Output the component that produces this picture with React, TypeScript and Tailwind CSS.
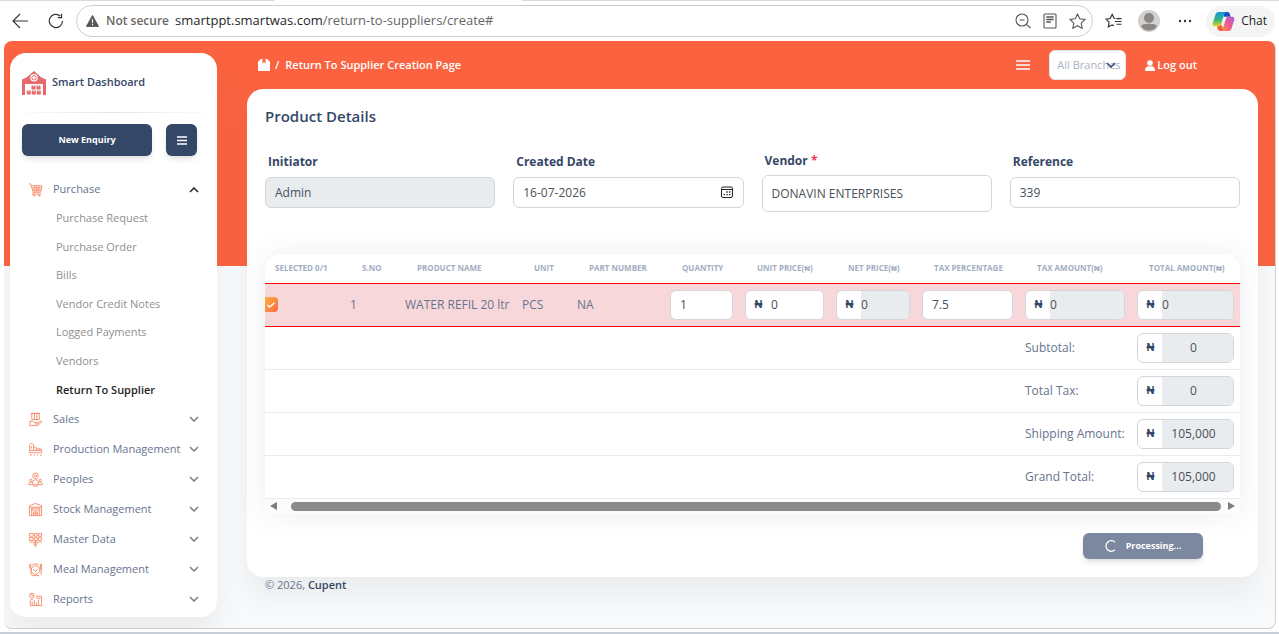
import { useState } from 'react'
import type { ReactNode } from 'react'

const purchaseLinks = [
  'Purchase Request',
  'Purchase Order',
  'Bills',
  'Vendor Credit Notes',
  'Logged Payments',
  'Vendors',
  'Return To Supplier',
]

const icons: Record<string, ReactNode> = {
  Purchase: (
    <>
      <path d="M1 2h2l2.5 9h8L15 4H3.6M4.2 6.3h10.2M4.8 8.6h9M7 4l.6 7M9.5 4v7M12 4l-.6 7M5.5 11l-.6 2h9" />
      <circle cx="6.5" cy="14.3" r="0.8" />
      <circle cx="12" cy="14.3" r="0.8" />
    </>
  ),
  Sales: (
    <>
      <path d="M4 1.5h8v6.5H4zM6.8 1.5v6.5M9.4 1.5v6.5M3 1.5h10" />
      <path d="M2 9.5v5M2 10h3l2.5 1.5h3c1 0 1 1.3 0 1.3H7.6M10.8 11.5l3-1.8c.9 0 1 .8.4 1.3L10.5 14.5H2" />
    </>
  ),
  'Production Management': (
    <>
      <path d="M1.8 9V3l1-1.3h2L6 3v6M1.8 9h12.8v2.5H1.8zM6 5l3 1.6V9M9 6.6h2.5V9M11.5 7.5H14V9M3.5 4.5v2.5" />
      <path d="M2 14h2.2M6 14h1.6M9.3 14H11M12.8 14h1.8" />
    </>
  ),
  Peoples: (
    <>
      <circle cx="8" cy="4" r="3" />
      <circle cx="8" cy="4" r="1.1" />
      <circle cx="3" cy="9" r="1.3" />
      <circle cx="13" cy="9" r="1.3" />
      <path d="M4.7 12c0-5 6.6-5 6.6 0M.7 13.5c0-3.6 4.6-3.6 4.6 0M10.7 13.5c0-3.6 4.6-3.6 4.6 0M.7 13.5h14.6M5.5 15h5" />
    </>
  ),
  'Stock Management': (
    <>
      <path d="M1.5 14.5V4L8 1.5 14.5 4v10.5zM4 14.5V6.5h8.5v8M4 8.5h8.5M6 14.5v-4h4.5v4M8.2 10.5v4M6 12.5h4.5M1.5 5.5h13" />
    </>
  ),
  'Master Data': (
    <>
      <path d="M1.5 1.5h4v3h-4zM6.8 1.5h3v3h-3zM11.2 1.5h3.3v3h-3.3zM1.5 6h4v3h-4zM6.8 6h3v3h-3zM11.2 6h3.3v3h-3.3zM1.5 10.8h13M8 9v6M5.5 12.8h5M6.5 14.8h3" />
    </>
  ),
  'Meal Management': (
    <>
      <circle cx="8" cy="8.5" r="4.6" />
      <path d="M5.8 7.5l2.2 2.8 2.3-2.8M1.8 2v4.5M3 2v4M1.8 6.5h1.4V14M14 2c-1.4 1.5-1.4 5 0 6zv12M4.5 3c2-1.4 5-1.4 7 0M4 14.5h8" />
    </>
  ),
  Reports: (
    <>
      <circle cx="4" cy="3.8" r="2.5" />
      <path d="M4 2v2h1.6M8.5 4.5h6v10h-12V9M4.5 14.5V10M6.8 14.5V8.5M9 14.5V11M11.3 14.5V8M8.5 6.5h5M2.5 8.5l3-1" />
    </>
  ),
}

const sections = [
  'Sales',
  'Production Management',
  'Peoples',
  'Stock Management',
  'Master Data',
  'Meal Management',
  'Reports',
]

const columns = [
  { label: 'Selected 0/1', width: 79 },
  { label: 'S.No', width: 55 },
  { label: 'Product Name', width: 117 },
  { label: 'Unit', width: 55 },
  { label: 'Part Number', width: 93 },
  { label: 'Quantity', width: 75 },
  { label: 'Unit Price(₦)', width: 91 },
  { label: 'Net Price(₦)', width: 86 },
  { label: 'Tax Percentage', width: 103 },
  { label: 'Tax Amount(₦)', width: 112 },
  { label: 'Total Amount(₦)', width: 109 },
]

const totals = [
  { label: 'Subtotal:', value: '0' },
  { label: 'Total Tax:', value: '0' },
  { label: 'Shipping Amount:', value: '105,000' },
  { label: 'Grand Total:', value: '105,000' },
]

const field = 'w-full rounded-md border border-[#d2d6da] px-[9px] text-[12px] text-[#495057] outline-none'

function SectionIcon({ name }: { name: string }) {
  return (
    <svg viewBox="0 0 16 16" className="size-[15px] shrink-0" fill="none" stroke="#f5825f" strokeWidth="0.9">
      {icons[name]}
    </svg>
  )
}

function Chevron({ up = false }: { up?: boolean }) {
  return (
    <svg viewBox="0 0 10 6" className="h-[6px] w-[10px] shrink-0" fill="none" stroke={up ? '#222' : '#808080'} strokeWidth="1.5">
      <path d={up ? 'M1 5l4-4 4 4' : 'M1 1l4 4 4-4'} />
    </svg>
  )
}

function BrowserBar() {
  return (
    <header className="bg-white text-[#1f1f1f]">
      {/* bottom edge of the tab strip, open under the active tab */}
      <div className="flex h-px">
        <div className="w-[275px] bg-[#d9d9d9]" />
        <div className="w-[247px]" />
        <div className="flex-1 bg-[#d9d9d9]" />
      </div>
      <div className="flex h-10 items-center pl-3 pr-1">
        <button aria-label="Back">
          <svg viewBox="0 0 16 16" className="size-4" fill="none" stroke="#333" strokeWidth="1.1">
            <path d="M16 8H1M8 1L1 8l7 7" />
          </svg>
        </button>
        <button aria-label="Refresh" className="ml-5">
          <svg viewBox="0 0 16 16" className="size-4" fill="none" stroke="#333" strokeWidth="1.2">
            <path d="M14.5 8a6.6 6.6 0 1 1-2.2-5M13.6.8v3.8H9.8" />
          </svg>
        </button>
        <div className="ml-3 flex h-8 min-w-0 flex-1 items-center rounded-full border border-[#cfcfcf] pl-[9px] pr-[6px]">
          <svg viewBox="0 0 14 13" className="h-[12px] w-[13px]">
            <path d="M7 .5L13.6 12.5H.4z" fill="#5b5653" stroke="#5b5653" strokeLinejoin="round" />
            <path d="M7 4.5v4M7 9.6v1.4" stroke="#fff" strokeWidth="1.3" />
          </svg>
          <span className="ml-[7px] text-[12px] font-semibold text-[#6b6663]">Not secure</span>
          <span className="ml-[6px] flex-1 text-[13px]">
            smartppt.smartwas.com<span className="text-[#666]">/return-to-suppliers/create#</span>
          </span>
          <div className="flex items-center gap-3">
            <svg viewBox="0 0 16 16" className="size-4" fill="none" stroke="#555" strokeWidth="1.1">
              <circle cx="7" cy="7" r="6" />
              <path d="M4.5 7h5M11.3 11.3L15.5 15" />
            </svg>
            <svg viewBox="0 0 14 16" className="h-4 w-[14px]" fill="none" stroke="#555" strokeWidth="1.1">
              <rect x="1" y="1" width="12" height="14" rx="1" />
              <path d="M3.3 4h7.4M3.3 6.5h7.4M3.3 9h4.5" strokeWidth="1.3" />
            </svg>
            <svg viewBox="0 0 18 17" className="h-4 w-[17px]" fill="none" stroke="#555" strokeWidth="1.1">
              <path d="M9 1l2.4 5.2 5.6.7-4.1 3.8 1.1 5.6L9 13.5l-5 2.8 1.1-5.6L1 6.9l5.6-.7z" />
            </svg>
          </div>
        </div>
        <div className="flex items-center">
          <svg viewBox="0 0 18 16" className="ml-3 h-4 w-[17px]" fill="none" stroke="#333" strokeWidth="1.2">
            <path d="M11 5.3L9.6 5 7.6 1 5.5 5.3 1 6l3.3 3.2-.8 5 4-2.1 2 1M12 5.5h5.5M10.5 8.5h7M12 11.5h5.5" />
          </svg>
          <svg viewBox="0 0 22 22" className="ml-4 size-[22px]">
            <circle cx="11" cy="11" r="11" fill="#d3d0cd" />
            <circle cx="11" cy="8" r="5" fill="#8b8785" />
            <path d="M3.3 16c0-3 15.4-3 15.4 0-2 6-13.4 6-15.4 0z" fill="#8b8785" />
          </svg>
          <svg viewBox="0 0 14 4" className="ml-[18px] h-1 w-[14px]" fill="#333">
            <circle cx="2" cy="2" r="1.2" />
            <circle cx="7" cy="2" r="1.2" />
            <circle cx="12" cy="2" r="1.2" />
          </svg>
          <button className="ml-[14px] flex h-[31px] items-center gap-[6px] rounded-full bg-[#f4f4f4] pl-[6px] pr-2 text-[12px]">
            <svg viewBox="0 0 24 22" className="h-[21px] w-[23px]">
              <defs>
                <linearGradient id="cpA" x1="0" y1="0" x2="0" y2="1">
                  <stop offset="0" stopColor="#1293e8" />
                  <stop offset="0.55" stopColor="#35b97c" />
                  <stop offset="1" stopColor="#f2cf22" />
                </linearGradient>
                <linearGradient id="cpB" x1="1" y1="0" x2="0" y2="1">
                  <stop offset="0" stopColor="#a55be8" />
                  <stop offset="0.5" stopColor="#ef5b8f" />
                  <stop offset="1" stopColor="#fb9a4c" />
                </linearGradient>
              </defs>
              <path d="M13 1h3.5c1.3 0 1.8 1 2.2 2.3L19.5 6H12z" fill="#1a4fc4" />
              <path d="M7 1h8c-1.5.4-2 1.5-2.5 3L9.5 14c-.5 1.4-1.2 2-2.5 2H3C.8 16 .2 14.5.8 12.5L3.5 4C4.2 2 5.2 1 7 1z" fill="url(#cpA)" />
              <path d="M17 21H9c1.5-.4 2-1.5 2.500-3L14.5 8c.5-1.4 1.2-2 2.500-2h4c2.200 0 2.800 1.500 2.200 3.500L20.500 18c-.7 2-1.700 3-3.500 3z" fill="url(#cpB)" />
              <path d="M11 21H8.5C7 21 6.300 20 5.900 18.700L5.200 16H7c1.300 0 2-.6 2.500-2l2 4z" fill="#f3622f" />
            </svg>
            Chat
          </button>
        </div>
      </div>
    </header>
  )
}

function Sidebar() {
  return (
    <aside className="w-[207px] shrink-0 self-start rounded-2xl bg-white pb-[3px] shadow-[0_20px_27px_rgba(0,0,0,0.05)]">
      <a href="#" className="flex h-[59px] items-center gap-[6px] pl-3 text-[11px] font-semibold text-[#344767]">
        <svg viewBox="0 0 24 24" className="size-6" fill="#e46a6b">
          <path fillRule="evenodd" d="M0 24V8.5L4.5 6.5 12 0l7.5 6.5L24 8.5V24h-3V13H3v11zM12 3a3.8 3.8 0 1 0 0 7.6A3.8 3.8 0 0 0 12 3z" />
          <circle cx="12" cy="6.8" r="2.2" fill="none" stroke="#e46a6b" />
          <path d="M9.5 14.5h4v4h-4zM14.5 14.5h4v4h-4zM4.8 19.5h4v4h-4zM9.8 19.5h4v4h-4zM14.8 19.5h4v4h-4z" />
          <path d="M11.5 14.5V16M16.5 14.5V16M6.8 19.5V21M11.8 19.5V21M16.8 19.5V21" stroke="#fff" strokeWidth="0.7" />
        </svg>
        Smart Dashboard
      </a>
      <div className="h-px bg-gradient-to-r from-transparent via-[#e3e4e6] to-transparent" />
      <div className="flex justify-between pl-3 pr-5 pt-[11px]">
        <button className="h-8 w-[130px] rounded-md bg-[#344767] text-[9px] font-bold text-white shadow-md">New Enquiry</button>
        <button aria-label="Menu" className="flex h-8 w-[31px] items-center justify-center rounded-md bg-[#344767] shadow-md">
          <svg viewBox="0 0 10 9" className="h-[9px] w-[10px]" stroke="#fff" strokeWidth="1.4">
            <path d="M0 1h10M0 4.5h10M0 8h10" />
          </svg>
        </button>
      </div>
      <nav className="pt-[18px] text-[11px] text-[#67748e]">
        <a href="#" className="flex h-[30px] items-center px-[18px] pt-px">
          <SectionIcon name="Purchase" />
          <span className="ml-[10px] flex-1">Purchase</span>
          <Chevron up />
        </a>
        <ul className="flex h-[200px] flex-col pl-[46px] text-[#8f8f8f]">
          {purchaseLinks.map((link) => (
            <li key={link} className="flex flex-1 items-center">
              <a href="#" className={link === 'Return To Supplier' ? 'font-semibold text-[#252525]' : ''}>
                {link}
              </a>
            </li>
          ))}
        </ul>
        {sections.map((name) => (
          <a key={name} href="#" className="flex h-[30px] items-center px-[18px]">
            <SectionIcon name={name} />
            <span className="ml-[10px] flex-1 whitespace-nowrap">{name}</span>
            <Chevron />
          </a>
        ))}
      </nav>
    </aside>
  )
}

function TopNav() {
  return (
    <div className="flex h-[36px] items-center px-[11px] pb-3 text-[11px] font-semibold text-white">
      <svg viewBox="0 0 12 12" className="size-3" fill="#fff">
        <path d="M2.8 0H4.5v4.2L6 3.5l1.5.7V0h1.700L12 3v8a1 1 0 0 1-1 1H1a1 1 0 0 1-1-1V3z" />
      </svg>
      <span className="ml-[5px]">/</span>
      <span className="ml-[6px] flex-1">Return To Supplier Creation Page</span>
      <button aria-label="Toggle sidebar">
        <svg viewBox="0 0 14 10" className="h-[10px] w-[14px]" stroke="#fff" strokeWidth="1.3">
          <path d="M0 1h14M0 5h14M0 9h14" />
        </svg>
      </button>
      <div className="relative ml-[19px]">
        <select aria-label="Branch" className="block h-[30px] w-[77px] appearance-none rounded-md border border-[#e4e6ea] bg-white pl-[7px] text-[11px] font-normal text-[#a9b2c3]">
          <option>All Branches</option>
        </select>
        <svg viewBox="0 0 10 6" className="pointer-events-none absolute right-[10px] top-3 h-[6px] w-[10px]" fill="none" stroke="#44557a" strokeWidth="1.7">
          <path d="M1 1l4 4 4-4" />
        </svg>
      </div>
      <a href="#" className="ml-[19px] mr-[50px] flex items-center gap-[2px]">
        <svg viewBox="0 0 10 11" className="h-[11px] w-[10px]" fill="#fff">
          <circle cx="5" cy="3" r="2.8" />
          <path d="M0 11c0-3 1-4.5 3-4.800h4c2 .3 3 1.800 3 4.800z" />
        </svg>
        Log out
      </a>
    </div>
  )
}

function Money({ label, value, readOnly = true, summary = false }: { label: string; value: string; readOnly?: boolean; summary?: boolean }) {
  return (
    <div className="flex h-[30px] overflow-hidden rounded-md border border-[#d2d6da] bg-white">
      <span className="flex w-6 shrink-0 items-center justify-center pl-px text-[11px] font-semibold text-[#344767]">₦</span>
      <input
        aria-label={label}
        defaultValue={value}
        readOnly={readOnly}
        className={`w-full min-w-0 text-[12px] text-[#495057] outline-none ${readOnly ? 'bg-[#e9ecef]' : 'bg-white pl-px'} ${summary ? 'pr-2 text-center' : ''}`}
      />
    </div>
  )
}

function ItemsTable() {
  const [checked, setChecked] = useState(true)

  return (
    <div className="overflow-hidden rounded-t-2xl bg-white">
      <table className="w-full table-fixed border-collapse text-left">
        <colgroup>
          {columns.map((col) => (
            <col key={col.label} style={{ width: col.width }} />
          ))}
        </colgroup>
        <thead>
          <tr className="h-[29px] text-[8px] font-bold uppercase text-[#a3aec2]">
            {columns.map((col) => (
              <th key={col.label} className="whitespace-nowrap pl-[18px] first:pl-[10px]">
                {col.label}
              </th>
            ))}
          </tr>
        </thead>
        <tbody className="text-[12px] text-[#67748e]">
          <tr className="h-[43px] border-y border-[#ff0000] bg-[#f8d7da] *:px-[6px]">
            <td>
              <label className="relative -ml-[6px] block h-[15px] w-[13px]">
                <input
                  type="checkbox"
                  aria-label="Select item"
                  checked={checked}
                  onChange={() => setChecked(!checked)}
                  className="block h-[15px] w-[13px] appearance-none rounded-r-sm bg-white checked:bg-linear-to-br checked:from-[#fbb140] checked:to-[#fb6340]"
                />
                {checked && (
                  <svg viewBox="0 0 8 6" className="pointer-events-none absolute left-[2px] top-[5px] h-[6px] w-[8px]" fill="none" stroke="#fff" strokeWidth="1.4">
                    <path d="M.5 3l2.2 2L7.5.7" />
                  </svg>
                )}
              </label>
            </td>
            <td>1</td>
            <td className="whitespace-nowrap">WATER REFIL 20 ltr</td>
            <td>PCS</td>
            <td>NA</td>
            <td>
              <input aria-label="Quantity" defaultValue="1" className={`${field} block h-[30px] bg-white`} />
            </td>
            <td>
              <Money label="Unit price" value="0" readOnly={false} />
            </td>
            <td>
              <Money label="Net price" value="0" />
            </td>
            <td>
              <input aria-label="Tax percentage" defaultValue="7.5" className={`${field} block h-[30px] bg-white`} />
            </td>
            <td>
              <Money label="Tax amount" value="0" />
            </td>
            <td>
              <Money label="Total amount" value="0" />
            </td>
          </tr>
          {totals.map((row) => (
            <tr key={row.label} className="h-[43px] border-b border-[#e9ecef] *:px-[6px]">
              <td colSpan={9} />
              <td className="whitespace-nowrap">{row.label}</td>
              <td>
                <Money label={row.label} value={row.value} summary />
              </td>
            </tr>
          ))}
        </tbody>
      </table>
      {/* horizontal scroll track */}
      <div className="flex h-[15px] items-center justify-between bg-[#fcfcfc] px-[5px]">
        <svg viewBox="0 0 7 8" className="h-2 w-[7px]" fill="#7d7d7d">
          <path d="M7 0v8L0 4z" />
        </svg>
        <div className="ml-[14px] mr-[7px] h-[9px] flex-1 rounded-full bg-[#8b8b8b]" />
        <svg viewBox="0 0 7 8" className="h-2 w-[7px]" fill="#7d7d7d">
          <path d="M0 0v8l7-4z" />
        </svg>
      </div>
    </div>
  )
}

function ProductForm() {
  const label = 'block pl-[3px] text-[12px] leading-4 font-bold text-[#344767]'

  return (
    <form className="rounded-2xl bg-white px-[18px] pb-[18px] pt-4 shadow-[0_20px_27px_rgba(0,0,0,0.05)]" onSubmit={(e) => e.preventDefault()}>
      <h1 className="text-[15px] leading-[22px] font-semibold text-[#344767]">Product Details</h1>
      <div className="mt-[26px] grid grid-cols-4 items-start gap-[18px]">
        <div className="pt-px">
          <label htmlFor="initiator" className={label}>Initiator</label>
          <input id="initiator" defaultValue="Admin" readOnly className={`${field} mt-[7px] block h-[31px] bg-[#e9ecef]`} />
        </div>
        <div className="pt-px">
          <label htmlFor="created" className={label}>Created Date</label>
          <div className="relative mt-[7px]">
            <input id="created" defaultValue="16-07-2026" className={`${field} block h-[31px] bg-white`} />
            <svg viewBox="0 0 12 12" className="pointer-events-none absolute right-[11px] top-[9px] size-3" fill="none" stroke="#222">
              <rect x="0.5" y="1" width="11" height="10.5" rx="1.5" />
              <path d="M.5 3.5h11" />
              <path d="M5.3 6h1.4M8 6h1.4M2.6 8.7H4M5.3 8.7h1.4M8 8.7h1.4" strokeWidth="1.3" />
            </svg>
          </div>
        </div>
        <div>
          <label htmlFor="vendor" className={label}>
            Vendor <span className="text-[#f5365c]">*</span>
          </label>
          <select id="vendor" className={`${field} mt-[6px] block h-[37px] appearance-none bg-white`}>
            <option>DONAVIN ENTERPRISES</option>
          </select>
        </div>
        <div className="pt-px">
          <label htmlFor="reference" className={label}>Reference</label>
          <input id="reference" defaultValue="339" className={`${field} mt-[7px] block h-[31px] bg-white`} />
        </div>
      </div>
      <div className="mt-[42px] rounded-t-2xl shadow-[0_0_30px_rgba(52,71,103,0.09)]">
        <ItemsTable />
      </div>
      <div className="mt-[19px] flex justify-end pr-[37px]">
        <button className="flex h-[26px] w-[120px] items-center justify-center gap-[9px] rounded-md bg-[#7b889f] text-[9px] font-bold text-white shadow-md">
          <svg viewBox="0 0 12 12" className="size-3" fill="none" stroke="#fff" strokeWidth="1.3">
            <path d="M10 2.2A5.3 5.3 0 1 0 10 9.8" />
          </svg>
          Processing...
        </button>
      </div>
    </form>
  )
}

export default function App() {
  return (
    <div className="flex min-h-screen flex-col bg-white font-['Open_Sans',sans-serif]">
      <BrowserBar />
      <div className="mb-[3px] ml-1 mr-[3px] flex flex-1 gap-[30px] overflow-hidden rounded-lg border-b border-r border-[#cfd2d5] bg-[linear-gradient(#fb6340_225px,#f8f9fa_225px)] pl-[6px] pr-[17px] pt-3">
        <Sidebar />
        <main className="min-w-0 flex-1">
          <TopNav />
          <ProductForm />
          <footer className="px-[18px] text-[11px] leading-4 text-[#67748e]">
            © 2026, <a href="#" className="font-semibold text-[#344767]">Cupent</a>
          </footer>
        </main>
      </div>
      <div className="h-[2px] bg-[#c9ced6]" />
    </div>
  )
}
